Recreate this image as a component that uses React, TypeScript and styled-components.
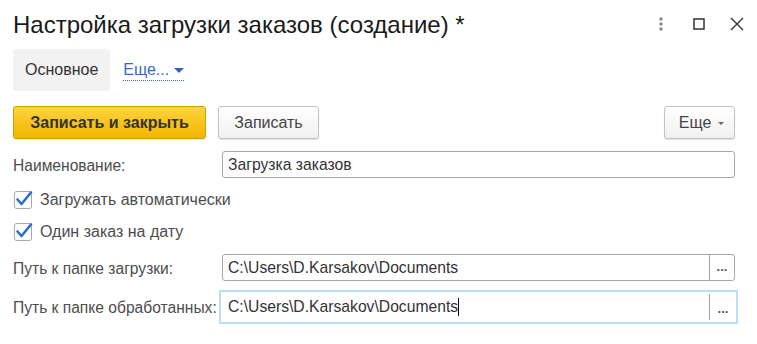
import React from 'react';
import styled, { createGlobalStyle } from 'styled-components';

const GlobalStyle = createGlobalStyle`
  html, body {
    margin: 0;
    padding: 0;
    background: #fff;
  }
  body {
    font-family: "Liberation Sans", Arial, sans-serif;
  }
`;

const Page = styled.div`
  width: 757px;
  height: 344px;
  box-sizing: border-box;
  padding: 0 22px 0 13px;
  display: flex;
  flex-direction: column;
  color: #333;
`;

const Header = styled.div`
  height: 48px;
  display: flex;
  align-items: center;
  margin-right: -9px;
`;

const Title = styled.h1`
  margin: 2px 0 0;
  flex: 1;
  font-size: 24px;
  font-weight: normal;
  color: #1a1a1a;
`;

const WindowButtons = styled.div`
  display: flex;
  align-items: center;
  gap: 24px;
`;

const IconBox = styled.span`
  width: 14px;
  height: 14px;
  display: flex;
  align-items: center;
  justify-content: center;
`;

const Tabs = styled.div`
  display: flex;
  align-items: center;
  margin-top: 1px;
  gap: 13px;
`;

const Tab = styled.div`
  height: 42px;
  padding: 0 12px;
  display: flex;
  align-items: center;
  background: #f2f2f2;
  border-radius: 3px;
  font-size: 16px;
  color: #333;
`;

const MoreLink = styled.span`
  display: inline-flex;
  align-items: center;
  gap: 5px;
  font-size: 16px;
  color: #3a6bbf;
  border-bottom: 1px dotted #3a6bbf;
  padding-bottom: 1px;
  margin-top: 2px;
`;

const Arrow = styled.span`
  width: 0;
  height: 0;
  border-left: 5px solid transparent;
  border-right: 5px solid transparent;
  border-top: 5px solid #2f63b8;
`;

const Toolbar = styled.div`
  display: flex;
  align-items: center;
  margin-top: 15px;
  gap: 12px;
`;

const Button = styled.button<{ $primary?: boolean; $width: number }>`
  height: 33px;
  width: ${({ $width }) => $width}px;
  box-sizing: border-box;
  border-radius: 3px;
  font-family: "Liberation Sans", Arial, sans-serif;
  font-size: 16px;
  cursor: pointer;
  display: flex;
  align-items: center;
  justify-content: center;
  gap: 7px;
  border: 1px solid ${({ $primary }) => ($primary ? '#c9a100' : '#c2c2c2')};
  background: ${({ $primary }) =>
    $primary ? 'linear-gradient(#fdd33e, #f2b600)' : 'linear-gradient(#ffffff, #f0f0f0)'};
  font-weight: ${({ $primary }) => ($primary ? 'bold' : 'normal')};
  color: ${({ $primary }) => ($primary ? '#333' : '#444')};
  box-shadow: 0 1px 1px rgba(0, 0, 0, 0.12);
`;

const RightButton = styled(Button)`
  margin-left: auto;
  padding-left: 10px;
`;

const SmallArrow = styled.span`
  width: 0;
  height: 0;
  border-left: 3px solid transparent;
  border-right: 3px solid transparent;
  border-top: 3px solid #666;
  margin-top: 1px;
`;

const Form = styled.div`
  display: flex;
  flex-direction: column;
  gap: 12px;
  margin-top: 12px;
`;

const FieldRow = styled.div`
  display: flex;
  align-items: center;
`;

const Label = styled.div`
  width: 209px;
  padding-top: 2px;
  font-size: 15.6px;
  color: #4d4d4d;
  white-space: nowrap;
`;

const InputBox = styled.div<{ $focused?: boolean }>`
  flex: 1;
  display: flex;
  align-items: stretch;
  box-sizing: border-box;
  height: ${({ $focused }) => ($focused ? 34 : 27)}px;
  margin: ${({ $focused }) => ($focused ? '-3px -3px -3px -3px' : '0')};
  border: ${({ $focused }) => ($focused ? '2px solid #bcdef7' : '1px solid #a6a6a6')};
  border-radius: ${({ $focused }) => ($focused ? 0 : 3)}px;
  background: #fff;
`;

const InputText = styled.div<{ $focused?: boolean }>`
  flex: 1;
  display: flex;
  align-items: center;
  padding-left: ${({ $focused }) => ($focused ? 7 : 5)}px;
  font-size: 15.7px;
  color: #333;
`;

const Caret = styled.span`
  width: 1px;
  height: 18px;
  background: #000;
`;

const ChoiceButton = styled.div<{ $focused?: boolean }>`
  width: ${({ $focused }) => ($focused ? 27 : 25)}px;
  margin: ${({ $focused }) => ($focused ? '2px 0' : '0')};
  border-left: 1px solid #a6a6a6;
  display: flex;
  align-items: flex-end;
  justify-content: center;
  padding-bottom: ${({ $focused }) => ($focused ? 5 : 7)}px;
  box-sizing: border-box;
  font-size: 13px;
  font-weight: bold;
  color: #555;
  line-height: 1;
`;

const CheckRow = styled.label`
  display: flex;
  align-items: center;
  height: 20px;
  gap: 6px;
  margin-left: 1px;
  font-size: 16px;
  color: #4d4d4d;
`;

const CheckIcon: React.FC = () => (
  <svg width="20" height="20" viewBox="0 0 20 20">
    <rect x="0.5" y="1.5" width="17" height="17" rx="2" fill="#fff" stroke="#a8a8a8" />
    <path d="M3.5 9.5 L7.5 14 L17 2.5" fill="none" stroke="#2a6fc0" strokeWidth="2.6" strokeLinecap="round" strokeLinejoin="round" />
  </svg>
);

const Dots: React.FC = () => (
  <svg width="8" height="14" viewBox="0 0 8 14">
    <circle cx="4" cy="2" r="1.7" fill="#888" />
    <circle cx="4" cy="7" r="1.7" fill="#888" />
    <circle cx="4" cy="12" r="1.7" fill="#888" />
  </svg>
);

const Square: React.FC = () => (
  <svg width="12" height="12" viewBox="0 0 12 12">
    <rect x="1" y="1" width="10" height="10" fill="none" stroke="#333" strokeWidth="1.5" />
  </svg>
);

const Cross: React.FC = () => (
  <svg width="14" height="14" viewBox="0 0 14 14">
    <path d="M1 1 L13 13 M13 1 L1 13" stroke="#333" strokeWidth="1.4" />
  </svg>
);

const App: React.FC = () => {
  return (
    <>
      <GlobalStyle />
      <Page>
        <Header>
          <Title>Настройка загрузки заказов (создание) *</Title>
          <WindowButtons>
            <IconBox><Dots /></IconBox>
            <IconBox><Square /></IconBox>
            <IconBox><Cross /></IconBox>
          </WindowButtons>
        </Header>

        <Tabs>
          <Tab>Основное</Tab>
          <MoreLink>
            Еще...
            <Arrow />
          </MoreLink>
        </Tabs>

        <Toolbar>
          <Button $primary $width={193}>Записать и закрыть</Button>
          <Button $width={101}>Записать</Button>
          <RightButton $width={71}>
            Еще
            <SmallArrow />
          </RightButton>
        </Toolbar>

        <Form>
          <FieldRow>
            <Label>Наименование:</Label>
            <InputBox>
              <InputText>Загрузка заказов</InputText>
            </InputBox>
          </FieldRow>

          <CheckRow>
            <CheckIcon />
            Загружать автоматически
          </CheckRow>
          <CheckRow>
            <CheckIcon />
            Один заказ на дату
          </CheckRow>

          <FieldRow>
            <Label>Путь к папке загрузки:</Label>
            <InputBox>
              <InputText>C:\Users\D.Karsakov\Documents</InputText>
              <ChoiceButton>...</ChoiceButton>
            </InputBox>
          </FieldRow>

          <FieldRow>
            <Label>Путь к папке обработанных:</Label>
            <InputBox $focused>
              <InputText $focused>
                C:\Users\D.Karsakov\Documents
                <Caret />
              </InputText>
              <ChoiceButton $focused>...</ChoiceButton>
            </InputBox>
          </FieldRow>
        </Form>
      </Page>
    </>
  );
};

export default App;
